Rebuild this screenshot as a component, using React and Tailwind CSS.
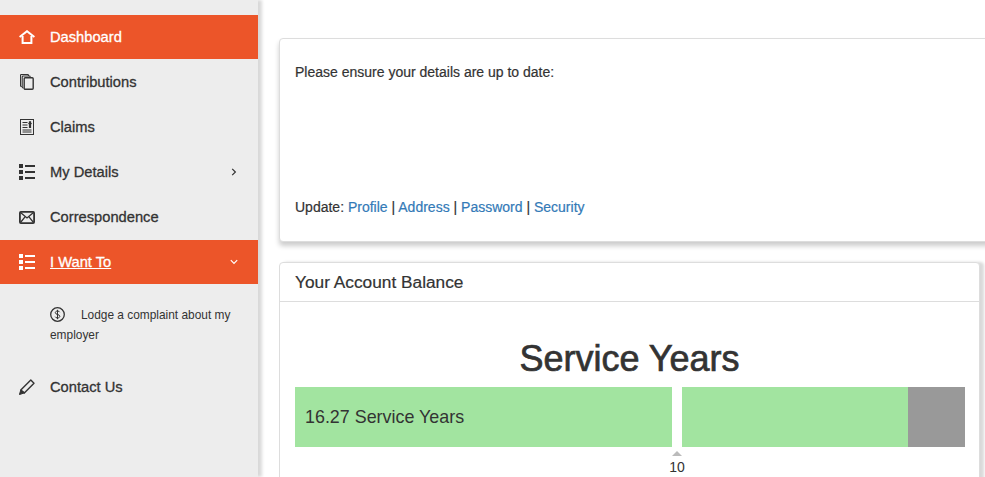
const font = { fontFamily: '"Liberation Sans", Arial, sans-serif' }

function HomeIcon() {
  return (
    <svg width="16" height="14" viewBox="0 0 16 14" fill="none" stroke="currentColor" strokeWidth="2">
      <path d="M.6 7 8 1.200 15.400 7" />
      <path d="M3.600 6v7h8.800V6" />
    </svg>
  )
}

function PagesIcon() {
  return (
    <svg width="14" height="16" viewBox="0 0 14 16" fill="none" stroke="currentColor" strokeWidth="1.100">
      <path d="M1.800 12.500h-.4a.9.9 0 0 1-.9-.9V1.400a.9.9 0 0 1 .9-.9h6.200a.9.9 0 0 1 .9.9v.6" />
      <path d="M3.500 14h-.4a.9.9 0 0 1-.9-.9V2.900a.9.9 0 0 1 .9-.9h6.200a.9.9 0 0 1 .9.9v.6" />
      <rect x="4.200" y="3.700" width="9" height="11.600" rx="1" strokeWidth="1.400" />
    </svg>
  )
}

function ClaimsIcon() {
  return (
    <svg width="14" height="16" viewBox="0 0 14 16" fill="none" stroke="currentColor">
      <rect x="0.500" y="0.500" width="13" height="15" strokeWidth="1" />
      <path d="M2.500 3.500h5M2.500 6h5M2.500 8.500h5M2.500 11h9M2.500 13h9" strokeWidth="1" />
      <path d="M10 2.200V9" strokeWidth="2.200" />
      <path d="M8.300 4.500h3.400" strokeWidth="1.200" />
    </svg>
  )
}

function ListIcon() {
  return (
    <svg width="16" height="16" viewBox="0 0 16 16" fill="currentColor">
      <rect x="0" y="0" width="4" height="4" />
      <rect x="0" y="6" width="4" height="4" />
      <rect x="0" y="12" width="4" height="4" />
      <rect x="6" y="1" width="10" height="2" />
      <rect x="6" y="7" width="10" height="2" />
      <rect x="6" y="13" width="10" height="2" />
    </svg>
  )
}

function MailIcon() {
  return (
    <svg width="16" height="13" viewBox="0 0 16 13" fill="none" stroke="currentColor">
      <rect x="0.900" y="0.900" width="14.200" height="11.200" rx="1" strokeWidth="1.800" />
      <path d="M1.500 1.500 8 7l6.500-5.500M1.500 11.500 6 5.800M14.500 11.500 10 5.800" strokeWidth="1.300" />
    </svg>
  )
}

function DollarIcon() {
  return (
    <svg width="15" height="15" viewBox="0 0 15 15" fill="none" stroke="currentColor" className="mr-4 inline-block align-[-3px]">
      <circle cx="7.500" cy="7.500" r="6.800" strokeWidth="1.300" />
      <path d="M9.700 5.200c-.3-.8-1.100-1.200-2.200-1.200-1.300 0-2.200.7-2.200 1.700 0 2.200 4.500 1.300 4.500 3.600 0 1-.9 1.700-2.300 1.700-1.200 0-2-.5-2.300-1.300M7.500 2.800v9.400" strokeWidth="1" />
    </svg>
  )
}

function PencilIcon() {
  return (
    <svg width="16" height="16" viewBox="0 0 16 16" fill="none" stroke="currentColor">
      <path d="M11.800 1 15 4.200 5.300 13.900 1.800 11z" strokeWidth="1.400" strokeLinejoin="round" />
      <path d="M1.800 11 .4 15.600l4.900-1.700z" fill="currentColor" strokeWidth="1" />
    </svg>
  )
}

function Chevron({ down }) {
  return (
    <svg width="8" height="8" viewBox="0 0 8 8" fill="none" stroke="currentColor" strokeWidth="1.200">
      <path d={down ? 'M.8 2.200 4 5.400l3.200-3.200' : 'M2.200.8 5.400 4 2.200 7.200'} />
    </svg>
  )
}

function NavItem({ icon, label, active, underline, chevron }) {
  return (
    <a className={`mb-px flex h-[44px] items-center text-[14.700px] [-webkit-text-stroke:0.3px] ${active ? 'bg-[#ec5529] text-white' : 'text-[#333]'}`}>
      <span className="flex w-[50px] shrink-0 pl-[19px]">
        <span className="flex w-[16px] justify-center">{icon}</span>
      </span>
      <span className={underline ? 'underline' : ''}>{label}</span>
      {chevron && <span className="mr-5 ml-auto flex">{chevron}</span>}
    </a>
  )
}

export default function App() {
  return (
    <div className="flex h-screen overflow-hidden bg-white text-[#333]" style={font}>
      {/* Sidebar */}
      <aside className="w-[258px] shrink-0 bg-[#ededed] pt-[15px] shadow-[4px_0_3px_rgba(0,0,0,0.15)]">
        <NavItem active icon={<HomeIcon />} label="Dashboard" />
        <NavItem icon={<PagesIcon />} label="Contributions" />
        <NavItem icon={<ClaimsIcon />} label="Claims" />
        <NavItem icon={<ListIcon />} label="My Details" chevron={<Chevron />} />
        <NavItem icon={<MailIcon />} label="Correspondence" />
        <NavItem active underline icon={<ListIcon />} label="I Want To" chevron={<Chevron down />} />
        <p className="mt-[21px] mb-[20px] pr-2 pl-[50px] text-[11.900px] leading-[20px]">
          <DollarIcon />
          Lodge a complaint about my employer
        </p>
        <NavItem icon={<PencilIcon />} label="Contact Us" />
      </aside>

      {/* Main */}
      <main className="min-w-0 flex-1 pt-[38px] pl-[21px]">
        <section className="mr-[-20px] flex h-[204px] flex-col justify-between rounded-[4px] border border-[#ddd] bg-white px-[15px] pt-[24px] pb-[25px] text-[14px] shadow-[0_4px_5px_rgba(0,0,0,0.2)] [-webkit-text-stroke:0.2px]">
          <p className="leading-[18px]">Please ensure your details are up to date:</p>
          <p className="leading-[18px]">
            Update: <a className="text-[#337ab7]">Profile</a> | <a className="text-[#337ab7]">Address</a> | <a className="text-[#337ab7]">Password</a> | <a className="text-[#337ab7]">Security</a>
          </p>
        </section>

        <section className="mt-[20px] mr-[5px] h-[300px] rounded-[4px] border border-[#ddd] bg-white shadow-[4px_0_3px_rgba(0,0,0,0.15)]">
          <header className="flex h-[39px] items-center border-b border-[#ddd] px-[15px] pt-[2px] text-[17.300px] [-webkit-text-stroke:0.2px]">
            Your Account Balance
          </header>
          <div className="px-[15px] pt-[32px]">
            <h2 className="mb-[3px] text-center text-[36px] leading-[50px] [-webkit-text-stroke:0.7px]">Service Years</h2>
            <div className="flex h-[60px] w-[670px] text-[17.900px] leading-[60px]">
              <div className="w-[377px] bg-[#a2e4a0] pl-[10px]">16.27 Service Years</div>
              <div className="w-[10px]" />
              <div className="w-[226px] bg-[#a2e4a0]" />
              <div className="w-[57px] bg-[#999]" />
            </div>
            <div className="ml-[377px] flex w-[10px] flex-col items-center pt-[4px]">
              <div className="h-0 w-0 border-x-[5px] border-b-[5px] border-x-transparent border-b-[#bbb]" />
              <span className="mt-[3px] text-[14px] leading-[16px]">10</span>
            </div>
          </div>
        </section>
      </main>
    </div>
  )
}
